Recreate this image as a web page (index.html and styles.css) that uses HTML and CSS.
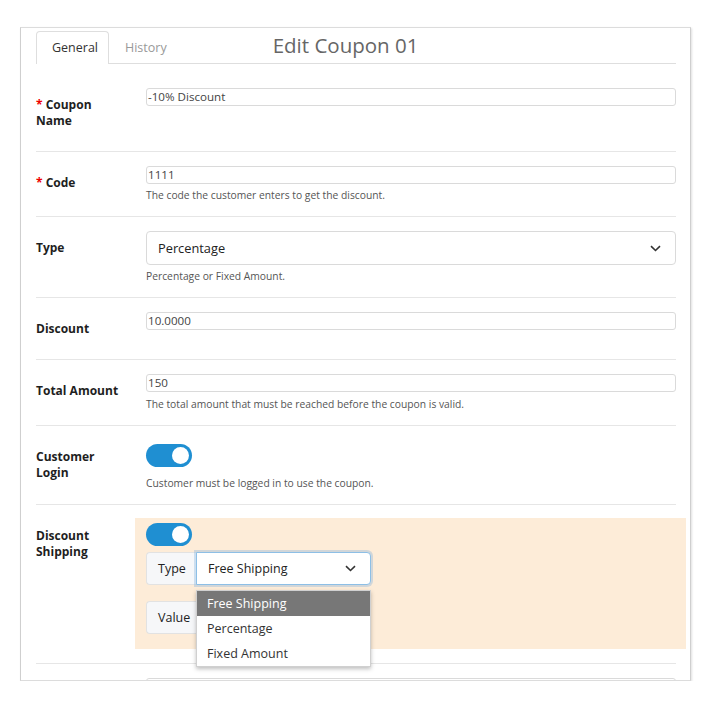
FILE: index.html
```html
<!DOCTYPE html>
<html lang="en">
<head>
<meta charset="utf-8">
<title>Edit Coupon 01</title>
<link rel="stylesheet" href="styles.css">
</head>
<body>
<div class="frame">
  <div class="tabs">
    <div class="tab active">General</div>
    <div class="tab">History</div>
    <h1 class="title">Edit Coupon 01</h1>
  </div>
  <div class="content">
    <div class="row">
      <div class="lbl required">Coupon Name</div>
      <div class="field"><div class="inp">-10% Discount</div></div>
    </div>
    <div class="row">
      <div class="lbl required">Code</div>
      <div class="field"><div class="inp">1111</div><div class="help">The code the customer enters to get the discount.</div></div>
    </div>
    <div class="row">
      <div class="lbl">Type</div>
      <div class="field">
        <div class="select"><span>Percentage</span><svg class="chev" width="11" height="7" viewBox="0 0 11 7"><path d="M1 1.2l4.5 4.3 4.5-4.3"/></svg></div>
        <div class="help">Percentage or Fixed Amount.</div>
      </div>
    </div>
    <div class="row">
      <div class="lbl">Discount</div>
      <div class="field"><div class="inp">10.0000</div></div>
    </div>
    <div class="row">
      <div class="lbl">Total Amount</div>
      <div class="field"><div class="inp">150</div><div class="help help-total">The total amount that must be reached before the coupon is valid.</div></div>
    </div>
    <div class="row">
      <div class="lbl">Customer Login</div>
      <div class="field"><div class="toggle toggle-top"><span class="knob"></span></div><div class="help help-tog">Customer must be logged in to use the coupon.</div></div>
    </div>
    <div class="row">
      <div class="lbl">Discount Shipping</div>
      <div class="field">
        <div class="peach">
          <div class="toggle"><span class="knob"></span></div>
          <div class="group first">
            <div class="addon">Type</div>
            <div class="gsel focus"><span>Free Shipping</span><svg class="chev" width="11" height="7" viewBox="0 0 11 7"><path d="M1 1.2l4.5 4.3 4.5-4.3"/></svg></div>
            <div class="menu">
              <div class="item on">Free Shipping</div>
              <div class="item">Percentage</div>
              <div class="item">Fixed Amount</div>
            </div>
          </div>
          <div class="group second">
            <div class="addon">Value</div>
            <div class="gsel"></div>
          </div>
        </div>
      </div>
    </div>
    <div class="row">
      <div class="lbl"></div>
      <div class="field"><div class="inp"></div></div>
    </div>
  </div>
</div>
</body>
</html>
```
FILE: styles.css
```css
* { box-sizing: border-box; }
body {
  margin: 0;
  background: #fff;
  font-family: "Open Sans", "Noto Sans", sans-serif;
  color: #222;
}
.frame {
  margin: 27px 0 0 20px;
  width: 671px;
  height: 654px;
  border: 1px solid #dcdcdc;
  border-left-color: #cfcfcf;
  border-right-color: #cfcfcf;
  box-shadow: 1px 1px 2px rgba(0,0,0,0.12);
  padding: 3px 14px 0 15px;
  overflow: hidden;
}
.tabs {
  display: flex;
  align-items: flex-start;
  height: 33px;
  border-bottom: 1px solid #dedede;
}
.tab {
  height: 33px;
  padding: 0 15px;
  font-size: 12.5px;
  line-height: 32px;
  color: #999;
  border: 1px solid transparent;
  border-bottom: none;
}
.tab.active {
  width: 73px;
  color: #333;
  background: #fff;
  border-color: #dedede;
  border-radius: 4px 4px 0 0;
  position: relative;
}
.title {
  margin: 0 0 0 90px;
  font-size: 20.5px;
  font-weight: 400;
  line-height: 28px;
  color: #666;
}
.content { padding-top: 10px; }
.row {
  display: grid;
  grid-template-columns: 90px 1fr;
  column-gap: 20px;
  padding: 14px 0;
  border-bottom: 1px solid #e6e6e6;
}
.lbl {
  padding: 9px 0 8px;
  font-size: 12px;
  line-height: 16px;
  font-weight: 700;
  color: #1e1e1e;
}
.lbl.required::before {
  content: "* ";
  color: #e00;
}
.inp {
  height: 18px;
  border: 1px solid #dadada;
  border-radius: 3px;
  padding: 0 1px;
  font-size: 11.6px;
  line-height: 16px;
  color: #444;
}
.help {
  margin-top: 4px;
  font-size: 10.3px;
  line-height: 14px;
  color: #555;
}
.help-total { margin-top: 5px; }
.help-tog { margin-top: 9px; }
.select {
  display: flex;
  align-items: center;
  justify-content: space-between;
  height: 34px;
  border: 1px solid #dadada;
  border-radius: 4px;
  padding: 0 14px 0 11px;
  font-size: 12.8px;
  color: #222;
}
.chev path { fill: none; stroke: #333; stroke-width: 1.6; }
.toggle {
  width: 46px;
  height: 23px;
  border-radius: 12px;
  background: #1f8fd2;
  position: relative;
}
.toggle-top { margin-top: 4px; }
.knob {
  position: absolute;
  right: 3px;
  top: 3px;
  width: 17px;
  height: 17px;
  border-radius: 50%;
  background: #fff;
}
.peach {
  margin: -1px -10px 0 -11px;
  padding: 5px 11px 15px;
  background: #fdecd8;
}
.group {
  display: flex;
  width: 225px;
  height: 33px;
  position: relative;
}
.group.first { margin-top: 6px; }
.group.second { margin-top: 16px; }
.addon {
  width: 50px;
  padding: 0 11px;
  background: #f6f7f9;
  border: 1px solid #e2e2e2;
  border-right: none;
  border-radius: 4px 0 0 4px;
  font-size: 12.5px;
  line-height: 31px;
  color: #222;
}
.gsel {
  flex: 1;
  display: flex;
  align-items: center;
  justify-content: space-between;
  padding: 0 14px 0 11px;
  background: #fff;
  border: 1px solid #dadada;
  border-radius: 0 4px 4px 0;
  font-size: 12.5px;
  color: #222;
}
.gsel.focus {
  border-color: #8dbfe6;
  box-shadow: 0 0 0 2px rgba(125, 175, 220, 0.35);
}
.menu {
  position: absolute;
  left: 50px;
  top: 38px;
  width: 175px;
  background: #fff;
  border: 1px solid #d0d0d0;
  box-shadow: 0 2px 4px rgba(0,0,0,0.25);
  z-index: 5;
}
.item {
  height: 25px;
  padding: 0 10px;
  font-size: 12.5px;
  line-height: 25px;
  color: #333;
}
.item.on { background: #777; color: #fff; }
```
